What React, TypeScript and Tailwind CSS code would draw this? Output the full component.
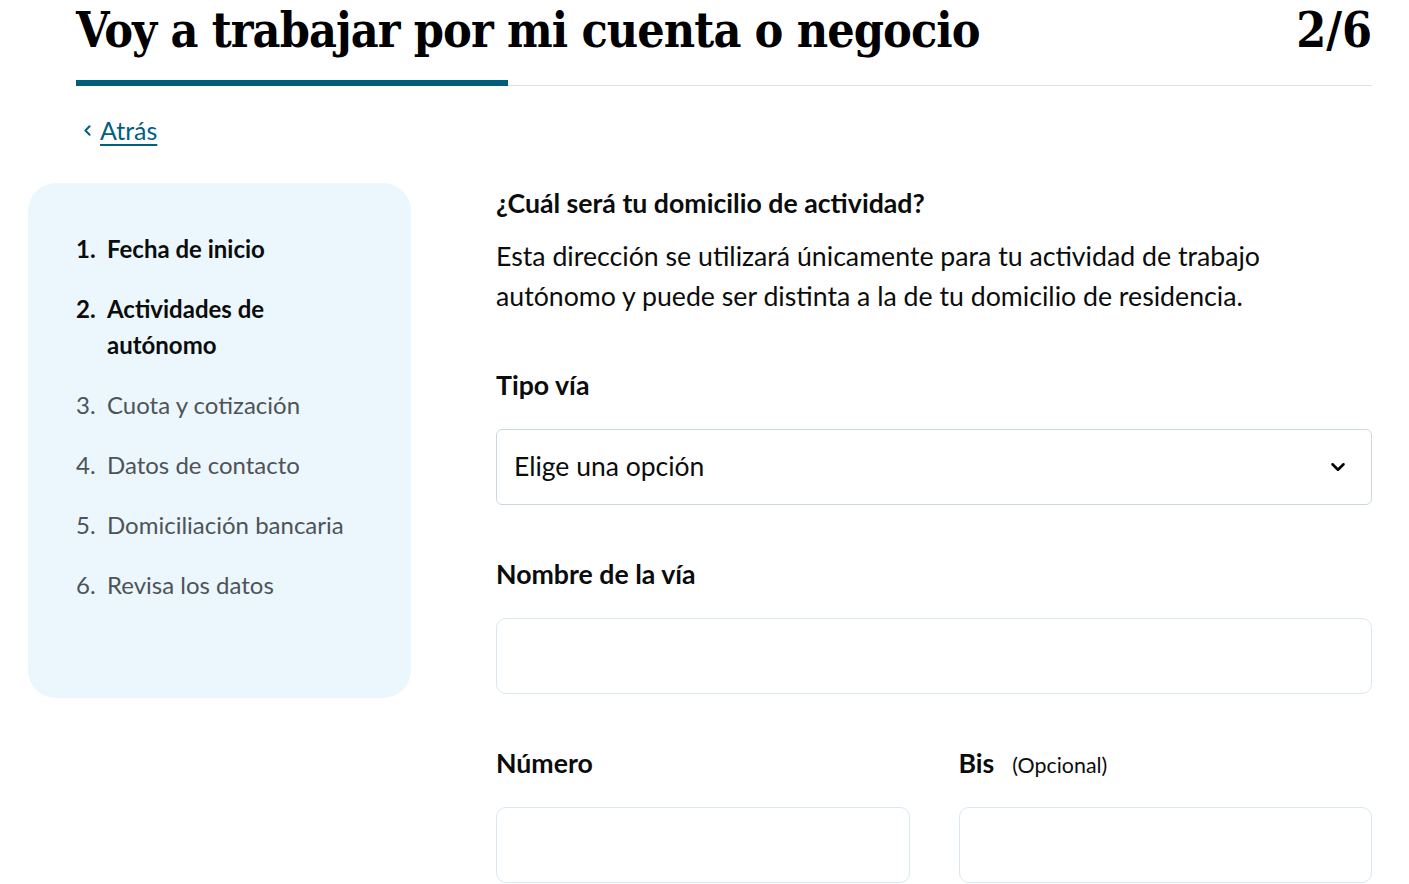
import { ChevronLeft, ChevronDown } from 'lucide-react';

const STEPS = [
  { n: 1, label: 'Fecha de inicio', done: true },
  { n: 2, label: 'Actividades de autónomo', done: true },
  { n: 3, label: 'Cuota y cotización', done: false },
  { n: 4, label: 'Datos de contacto', done: false },
  { n: 5, label: 'Domiciliación bancaria', done: false },
  { n: 6, label: 'Revisa los datos', done: false },
];

function FieldLabel({ children, hint }: { children: string; hint?: string }) {
  return (
    <div className="flex h-[36px] items-baseline gap-[18px] text-[26.7px] leading-[36px] font-bold text-[#0b0c0c]">
      {children}
      {hint && <span className="text-[21.4px] leading-none font-normal">{hint}</span>}
    </div>
  );
}

function TextBox() {
  return <div className="mt-[26px] h-[76px] rounded-[10px] border border-[#d9e8f0] bg-white" />;
}

export default function App() {
  return (
    <div className="min-h-screen bg-white pl-[28px] pr-[37px] font-['Lato','Noto_Sans',sans-serif] text-[#0b0c0c]">
      {/* Header */}
      <div className="pl-[48px]">
        <div className="-mt-[6px] flex items-end justify-between">
          <h1 className="font-['DejaVu_Serif','Liberation_Serif',serif] font-stretch-condensed text-[48px] leading-[72px] font-bold tracking-[-0.9px] text-black">
            Voy a trabajar por mi cuenta o negocio
          </h1>
          <span className="font-['DejaVu_Serif','Liberation_Serif',serif] font-stretch-condensed text-[48px] leading-[72px] font-bold text-black">
            2/6
          </span>
        </div>
        <div className="mt-[14px] flex items-end">
          <div className="h-[6px] w-[432px] bg-[#005e7d]" />
          <div className="h-px flex-1 bg-[#e2e2e2]" />
        </div>
        <a
          href="#"
          className="mt-[28px] flex w-fit items-center gap-[4px] text-[25px] leading-[32px] text-[#00607f]"
        >
          <ChevronLeft size={17} strokeWidth={2.8} className="ml-[3px]" />
          <span className="underline decoration-[1.5px] underline-offset-[4px]">Atrás</span>
        </a>
      </div>

      {/* Body */}
      <div className="mt-[37px] flex items-start gap-[85px]">
        <nav className="w-[383px] shrink-0 rounded-[28px] bg-[#ecf7fd] pl-[48px] pr-[20px] pt-[48px] pb-[95px]">
          <ol className="flex flex-col gap-[24px] text-[24px] leading-[36px]">
            {STEPS.map(s => (
              <li
                key={s.n}
                className={`flex ${s.done ? 'font-bold text-[#0b0c0c]' : 'text-[#4e5358]'}`}
              >
                <span className="w-[31px] shrink-0">{s.n}.</span>
                <span className="w-[250px]">{s.label}</span>
              </li>
            ))}
          </ol>
        </nav>

        <main className="flex-1">
          <h2 className="text-[26.7px] leading-[40px] font-bold">¿Cuál será tu domicilio de actividad?</h2>
          <p className="mt-[13px] text-[26.7px] leading-[40px]">
            Esta dirección se utilizará únicamente para tu actividad de trabajo autónomo y puede ser distinta a la
            de tu domicilio de residencia.
          </p>

          <div className="mt-[51px]">
            <FieldLabel>Tipo vía</FieldLabel>
            <div className="mt-[26px] flex h-[76px] items-center justify-between rounded-[6px] border border-[#cbd8e0] bg-white pl-[17px] pr-[22px]">
              <span className="text-[26.5px]">Elige una opción</span>
              <ChevronDown size={22} strokeWidth={2.8} className="text-black" />
            </div>
          </div>

          <div className="mt-[51px]">
            <FieldLabel>Nombre de la vía</FieldLabel>
            <TextBox />
          </div>

          <div className="mt-[51px] grid grid-cols-2 gap-[49px]">
            <div>
              <FieldLabel>Número</FieldLabel>
              <TextBox />
            </div>
            <div>
              <FieldLabel hint="(Opcional)">Bis</FieldLabel>
              <TextBox />
            </div>
          </div>
        </main>
      </div>
    </div>
  );
}
